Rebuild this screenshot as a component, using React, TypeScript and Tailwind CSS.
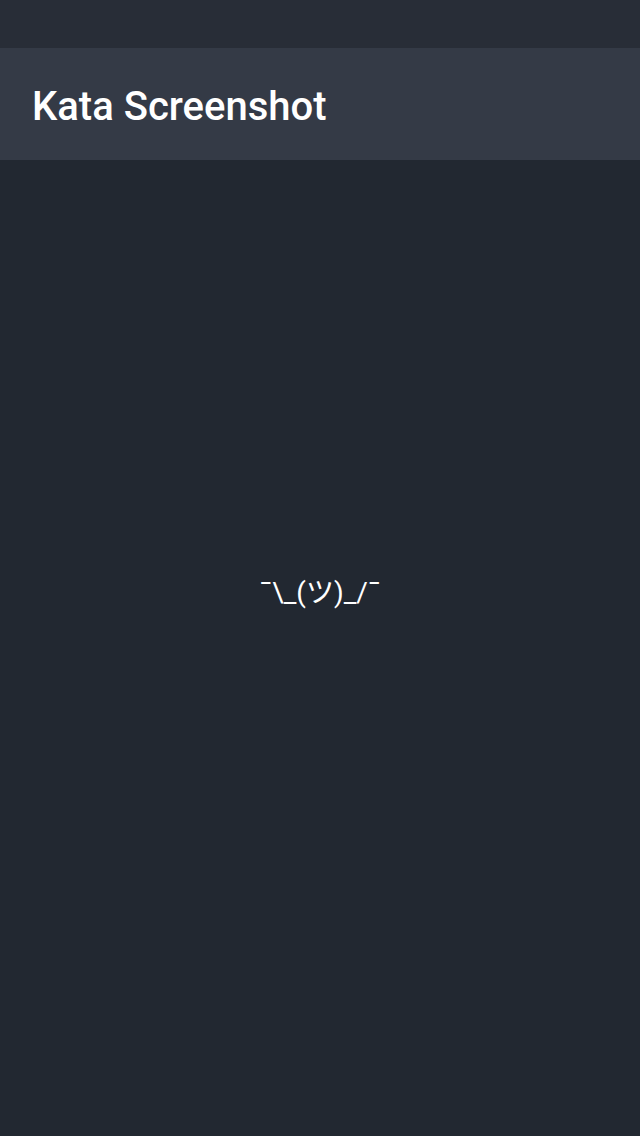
const App = () => {
    return (
        <div
            className="flex h-[1136px] w-[640px] flex-col bg-[#222831] text-white"
            style={{ fontFamily: 'Roboto, "Noto Sans CJK JP", sans-serif' }}
        >
            <div className="h-[48px] bg-[#282d37]" />
            <header className="flex h-[112px] items-center bg-[#343a46] px-[32px] pt-[6px]">
                <h1 className="text-[40px] font-medium leading-none">Kata Screenshot</h1>
            </header>
            <main className="flex flex-1 items-center justify-center pb-[110px]">
                <p className="text-[28px] leading-none">¯\_(ツ)_/¯</p>
            </main>
        </div>
    );
};

export default App;
